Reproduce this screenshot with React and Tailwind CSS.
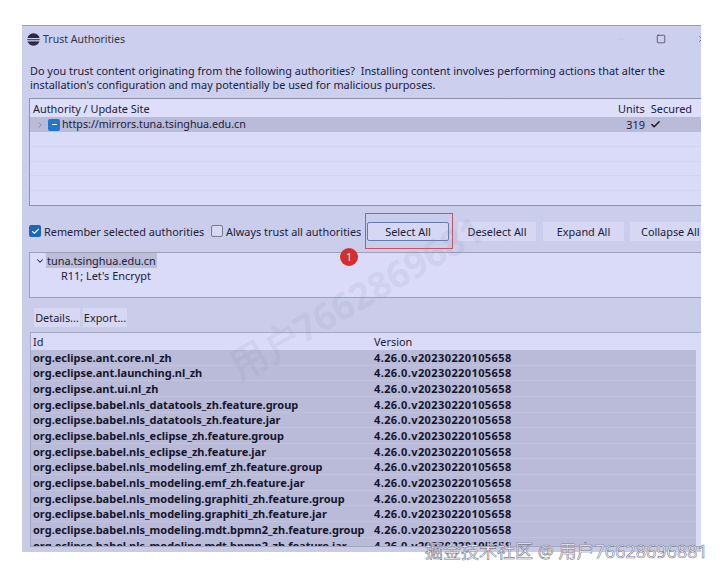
import React from 'react';
import { Check, ChevronDown, ChevronRight, Minus, Square, X } from 'lucide-react';

const VERSION = '4.26.0.v20230220105658';

const plugins = [
  'org.eclipse.ant.core.nl_zh',
  'org.eclipse.ant.launching.nl_zh',
  'org.eclipse.ant.ui.nl_zh',
  'org.eclipse.babel.nls_datatools_zh.feature.group',
  'org.eclipse.babel.nls_datatools_zh.feature.jar',
  'org.eclipse.babel.nls_eclipse_zh.feature.group',
  'org.eclipse.babel.nls_eclipse_zh.feature.jar',
  'org.eclipse.babel.nls_modeling.emf_zh.feature.group',
  'org.eclipse.babel.nls_modeling.emf_zh.feature.jar',
  'org.eclipse.babel.nls_modeling.graphiti_zh.feature.group',
  'org.eclipse.babel.nls_modeling.graphiti_zh.feature.jar',
  'org.eclipse.babel.nls_modeling.mdt.bpmn2_zh.feature.group',
  'org.eclipse.babel.nls_modeling.mdt.bpmn2_zh.feature.jar',
];

const EclipseLogo = () => (
  <svg width="13" height="13" viewBox="0 0 13 13" className="shrink-0">
    <circle cx="6.5" cy="6.5" r="6.2" fill="#2b2a44" />
    <rect x="0" y="5" width="13" height="1.2" fill="#d3d4ea" />
    <rect x="0" y="7.2" width="13" height="1.2" fill="#d3d4ea" />
  </svg>
);

const Button = ({ children, className = '' }) => (
  <div className={`h-[19px] shrink-0 flex items-center justify-center whitespace-nowrap bg-[#d5d7f3] ${className}`}>{children}</div>
);

const App = () => (
  <div className="relative w-[724px] h-[577px] overflow-hidden bg-white pt-[25px] pl-[22px] text-[10.9px] leading-[15px] text-[#20203a] font-['Noto_Sans','Liberation_Sans',sans-serif]">
    <div className="w-[679px] h-[527px] overflow-hidden flex flex-col border-t border-[#9a9cb4] bg-gradient-to-b from-[#ccd0ee] to-[#c8cae6]">
      {/* Title bar */}
      <div className="h-[26px] shrink-0 flex items-center pl-[5px] gap-[3px]">
        <EclipseLogo />
        <span className="text-[10.5px] text-[#33334a]">Trust Authorities</span>
        <div className="ml-auto flex items-center">
          <Minus size={10} strokeWidth={1} className="text-[#b5b8d4] mr-[30px]" />
          <Square size={10} strokeWidth={1.6} className="text-[#2b2b3d] mr-[31px]" />
          <X size={10} strokeWidth={1.3} className="text-[#2b2b3d] mr-[-6px]" />
        </div>
      </div>

      {/* Message */}
      <p className="ml-[8px] mt-[12px] w-[650px] h-[28px] leading-[14px] shrink-0">
        Do you trust content originating from the following authorities?&nbsp; Installing content involves performing actions that alter the installation's configuration and may potentially be used for malicious purposes.
      </p>

      {/* Authority table */}
      <div className="ml-[7px] mt-[6px] h-[108px] shrink-0 border border-r-0 border-[#8f91a8] bg-[#d9dbf8] flex flex-col">
        <div className="h-[18px] shrink-0 flex items-center pl-[3px] pr-[9px] bg-[#dcdefa]">
          <span className="flex-1">Authority / Update Site</span>
          <span className="w-[32px]">Units</span>
          <span className="w-[42px] text-right">Secured</span>
        </div>
        <div className="h-[15px] shrink-0 flex items-center bg-[#b9bbd8] pl-[5px]">
          <ChevronRight size={10} className="text-[#85869c]" />
          <span className="ml-[3px] w-[12px] h-[12px] rounded-[2px] bg-[#1f78cc] flex items-center justify-center">
            <span className="w-[5px] h-px bg-white" />
          </span>
          <span className="ml-[2px] flex-1 text-[10.7px]">https://mirrors.tuna.tsinghua.edu.cn</span>
          <span className="w-[28px] text-right">319</span>
          <Check size={11} strokeWidth={3.2} className="ml-[5px] mr-[40px] text-[#1a1a28]" />
        </div>
        <div className="flex-1 flex flex-col">
          {[0, 1, 2, 3, 4].map((i) => (
            <div key={i} className="flex-1 border-b border-[#d2d4f0] last:border-b-0" />
          ))}
        </div>
      </div>

      {/* Options row */}
      <div className="ml-[7px] mt-[15px] h-[20px] shrink-0 flex items-center whitespace-nowrap">
        <span className="shrink-0 w-[12px] h-[12px] rounded-[2px] bg-[#1f65b5] flex items-center justify-center">
          <Check size={9} strokeWidth={3} className="text-white" />
        </span>
        <span className="ml-[3px] w-[160px] shrink-0">Remember selected authorities</span>
        <span className="ml-[7px] shrink-0 w-[12px] h-[12px] rounded-[2px] border border-[#77798f] bg-[#d5d7f3]" />
        <span className="ml-[3px] w-[134px] shrink-0">Always trust all authorities</span>
        <Button className="ml-[7px] w-[82px] border border-[#5f7fb0] rounded-[2px]">Select All</Button>
        <Button className="ml-[9px] w-[78px]">Deselect All</Button>
        <Button className="ml-[7px] w-[81px]">Expand All</Button>
        <Button className="ml-[6px] w-[72px] justify-start pl-[11px]">Collapse All</Button>
      </div>

      {/* Certificate tree */}
      <div className="ml-[7px] mt-[11px] h-[46px] shrink-0 border-y border-l border-[#9d9fb8] bg-[#d9dbf8] pl-[5px]">
        <div className="flex items-center h-[15px]">
          <ChevronDown size={10} strokeWidth={2.5} className="text-[#2b2b3d]" />
          <span className="ml-[1px] px-[1px] bg-[#bcbed9]">tuna.tsinghua.edu.cn</span>
        </div>
        <div className="pl-[26px] h-[15px] flex items-center">R11; Let's Encrypt</div>
      </div>

      {/* Details buttons */}
      <div className="ml-[12px] mt-[10px] flex gap-[3px] shrink-0">
        <Button className="w-[46px]">Details...</Button>
        <Button className="w-[44px]">Export...</Button>
      </div>

      {/* Plugin table */}
      <div className="ml-[8px] mt-[5px] mb-[5px] flex-1 min-h-0 overflow-hidden border-y border-l border-[#a5a7c0] bg-[#d9dbf8] pr-[5px]">
        <div className="h-[17px] flex items-center pl-[2px]">
          <span className="w-[341px]">Id</span>
          <span>Version</span>
        </div>
        {plugins.map((id) => (
          <div key={id} className="h-[15.65px] flex items-center pl-[2px] bg-[#b9bbd9] font-bold text-[11px] text-[#16162c] border-b border-[#c0c2de]">
            <span className="w-[341px] whitespace-nowrap">{id}</span>
            <span className="tracking-[0.4px]">{VERSION}</span>
          </div>
        ))}
      </div>
    </div>

    {/* Annotation over the screenshot */}
    <div className="absolute left-[365px] top-[213px] w-[88px] h-[36px] border-[1.5px] border-[#d0525e]" />
    <div className="absolute left-[340px] top-[248px] w-[18px] h-[18px] rounded-full bg-[#d32f2f] text-white text-[10px] flex items-center justify-center">1</div>

    {/* Watermarks */}
    <div className="absolute left-[232px] top-[350px] -rotate-[30deg] origin-left text-[37px] leading-none whitespace-nowrap text-[#8c8ea8]/15 font-bold">
      用户7662869681
    </div>
    <div className="absolute left-[425px] top-[541px] text-[18px] leading-[20px] whitespace-nowrap text-white [-webkit-text-stroke:0.6px_#77778a] font-['Noto_Sans','Noto_Sans_CJK_SC',sans-serif]">
      掘金技术社区 @ 用户76628696881
    </div>
  </div>
);

export default App;
